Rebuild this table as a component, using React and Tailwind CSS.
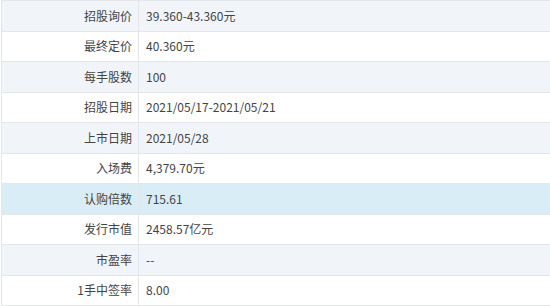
const rows = [
  { label: "招股询价", value: "39.360-43.360元", tone: "grey" },
  { label: "最终定价", value: "40.360元", tone: "white" },
  { label: "每手股数", value: "100", tone: "grey" },
  { label: "招股日期", value: "2021/05/17-2021/05/21", tone: "white" },
  { label: "上市日期", value: "2021/05/28", tone: "grey" },
  { label: "入场费", value: "4,379.70元", tone: "white" },
  { label: "认购倍数", value: "715.61", tone: "blue" },
  { label: "发行市值", value: "2458.57亿元", tone: "white" },
  { label: "市盈率", value: "--", tone: "grey" },
  { label: "1手中签率", value: "8.00", tone: "white" },
];

const toneClass = {
  grey: "bg-[#f1f5f9]",
  white: "bg-white",
  blue: "bg-[#d9edf7]",
};

export default function App() {
  return (
    <div
      className="h-[306px] w-[550px] overflow-hidden bg-white pl-px text-[12px] text-[#444]"
      style={{ fontFamily: '"Noto Sans CJK SC", "Liberation Sans", sans-serif' }}
    >
      <div className="border-l border-t border-[#e3e6ea]">
        {rows.map((row) => (
          <div
            key={row.label}
            className={`flex h-[30.5px] items-center border-b border-[#e3e6ea] ${toneClass[row.tone]}`}
          >
            <div className="flex h-full w-[137px] items-center justify-end border-r border-[#e3e6ea] pr-[6px]">
              {row.label}
            </div>
            <div className="pl-[7px]">{row.value}</div>
          </div>
        ))}
      </div>
    </div>
  );
}
